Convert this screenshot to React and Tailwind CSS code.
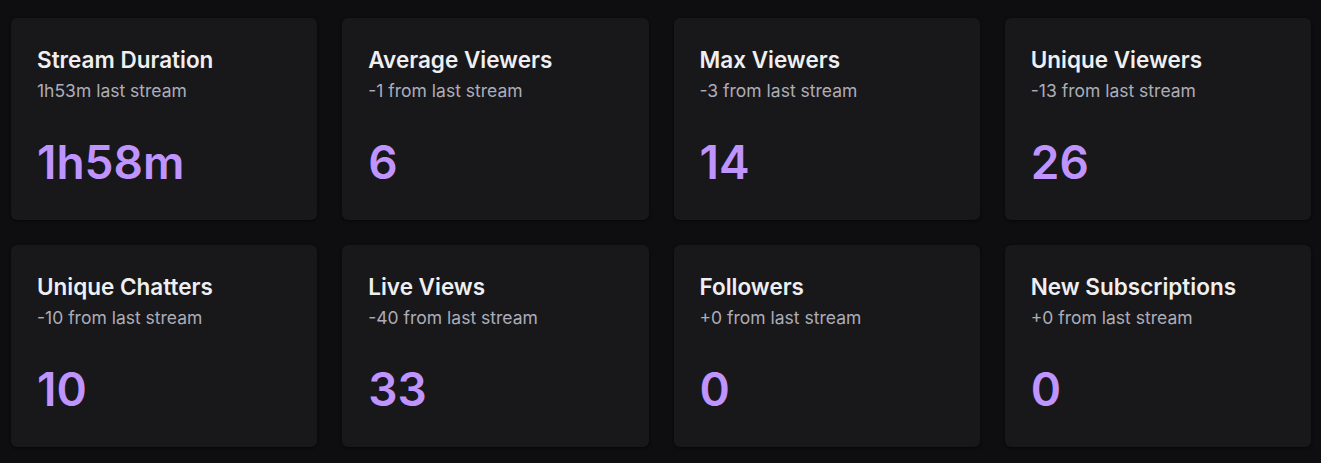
const stats = [
  { title: "Stream Duration", sub: "1h53m last stream", value: "1h58m" },
  { title: "Average Viewers", sub: "-1 from last stream", value: "6" },
  { title: "Max Viewers", sub: "-3 from last stream", value: "14" },
  { title: "Unique Viewers", sub: "-13 from last stream", value: "26" },
  { title: "Unique Chatters", sub: "-10 from last stream", value: "10" },
  { title: "Live Views", sub: "-40 from last stream", value: "33" },
  { title: "Followers", sub: "+0 from last stream", value: "0" },
  { title: "New Subscriptions", sub: "+0 from last stream", value: "0" },
];

function StatCard({ stat }) {
  return (
    <div className="flex h-[202px] flex-col rounded-md bg-[#18181b] px-[26px] pt-[28px] shadow-[0_1px_3px_rgba(0,0,0,0.6)]">
      <h3 className="text-[22.5px] font-semibold leading-[28px] text-[#efeff1]">{stat.title}</h3>
      <p className="mt-[4px] text-[17.5px] leading-[25px] text-[#adadb8]">{stat.sub}</p>
      <div className="mt-[35px] text-[46px] font-semibold leading-[48px] text-[#bf94ff]">{stat.value}</div>
    </div>
  );
}

export default function App() {
  return (
    <div className="min-h-[463px] bg-[#0e0e10] pl-[11px] pr-[10px] pt-[18px] font-['Inter',sans-serif]">
      <div className="grid grid-cols-4 gap-[25px]">
        {stats.map((s) => (
          <StatCard key={s.title} stat={s} />
        ))}
      </div>
    </div>
  );
}
